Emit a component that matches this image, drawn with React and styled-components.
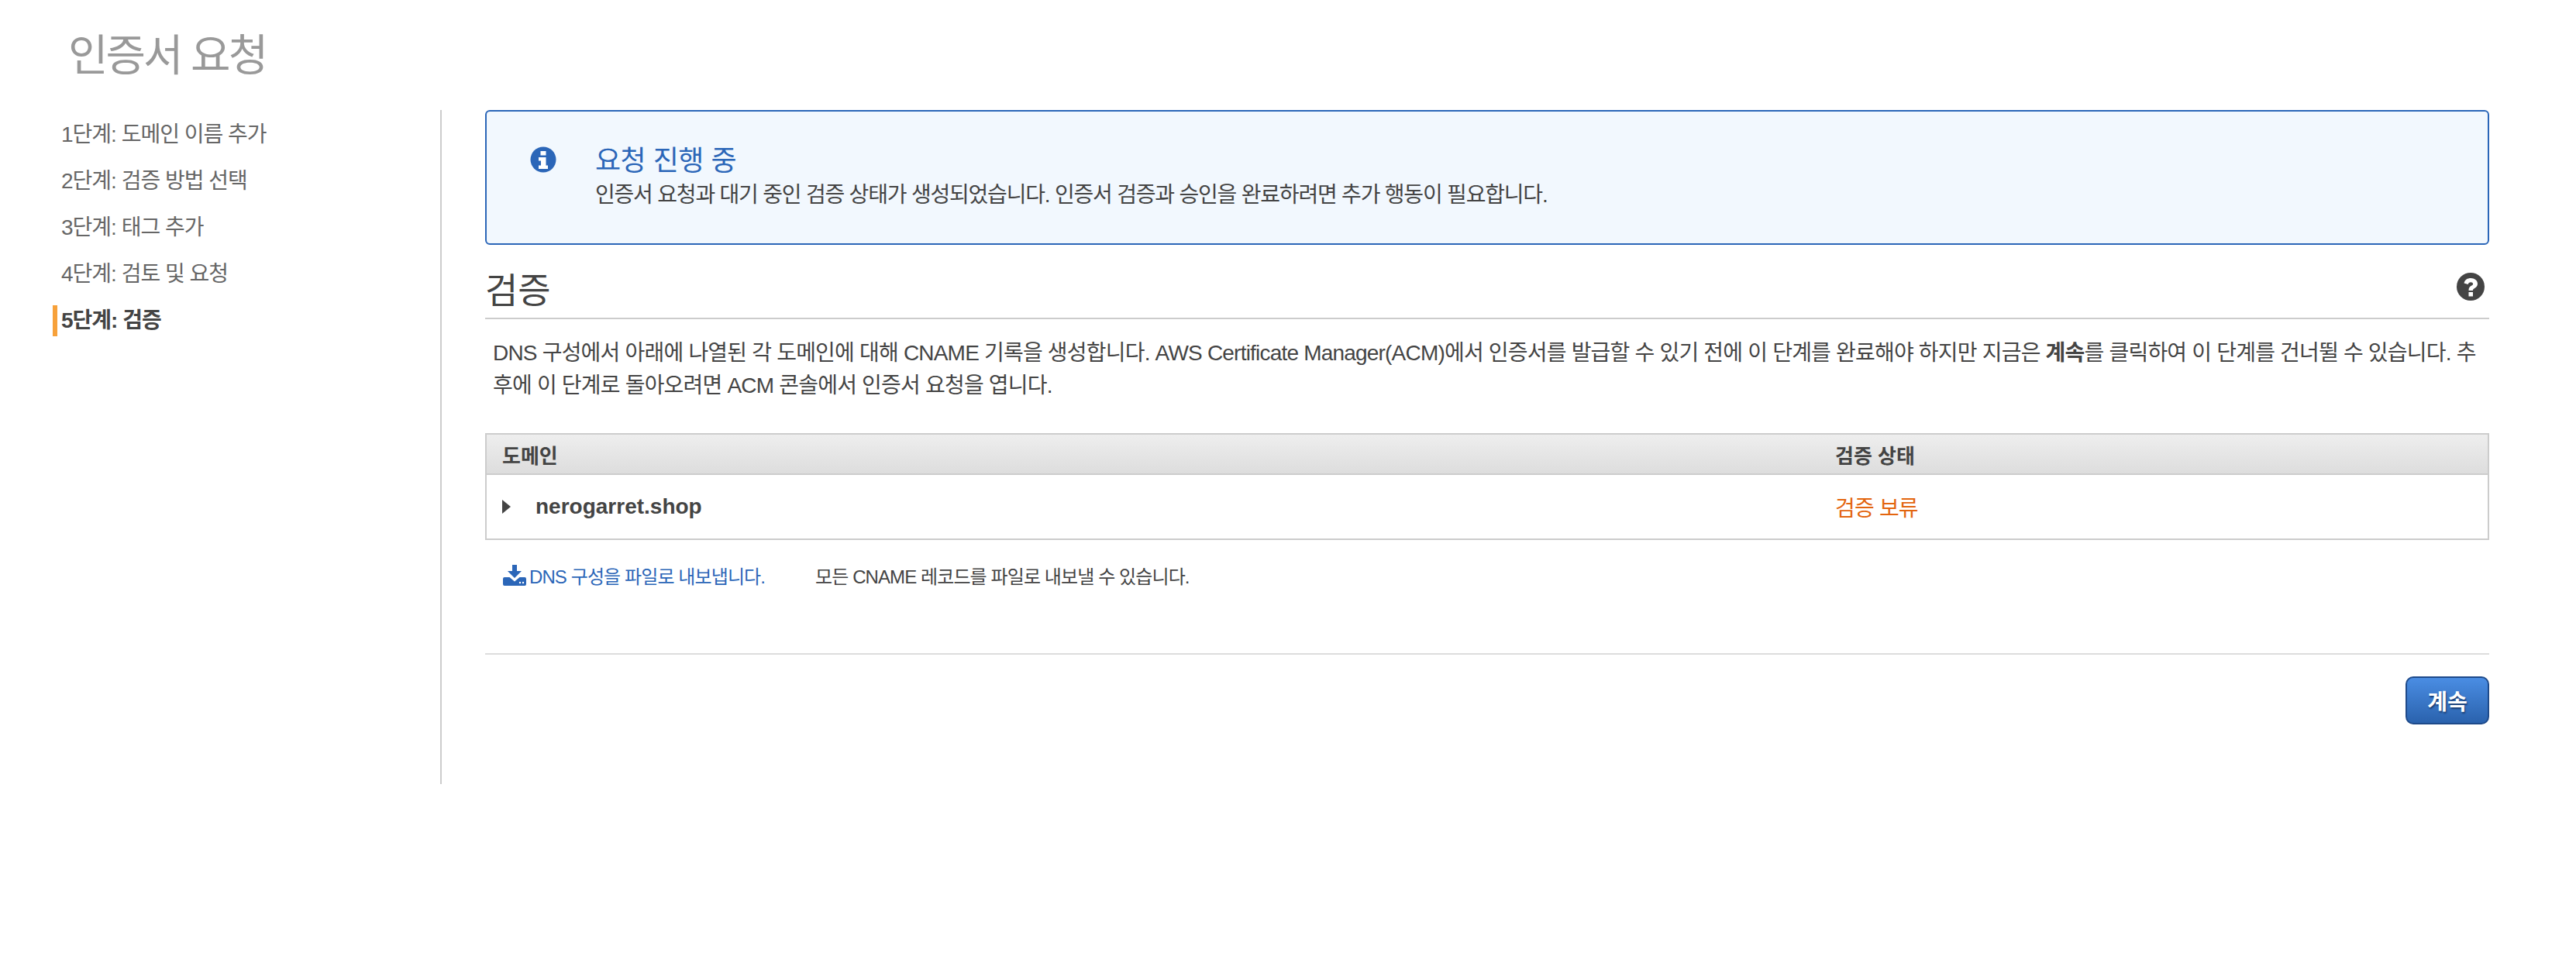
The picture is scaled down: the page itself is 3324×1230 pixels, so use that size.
import React from 'react'
import styled, {createGlobalStyle} from 'styled-components'

const GlobalStyle = createGlobalStyle`
	html, body {
		margin: 0;
		padding: 0;
		background: #fff;
	}
	body {
		font-family: "Liberation Sans", "Noto Sans CJK KR", sans-serif;
		color: #444;
	}
`;

const steps = [
	'1단계: 도메인 이름 추가',
	'2단계: 검증 방법 선택',
	'3단계: 태그 추가',
	'4단계: 검토 및 요청',
	'5단계: 검증'
];

const InfoIcon = () => (
	<svg width="34" height="34" viewBox="0 0 34 34">
		<circle cx="17" cy="17" r="16.5" fill="#2b66b8"/>
		<rect x="13.5" y="6" width="7" height="5.5" fill="#fff"/>
		<path d="M11 14h9.5v10.5H23V29H11v-4.5h3V18.5h-3z" fill="#fff"/>
	</svg>
);

const HelpIcon = () => (
	<svg width="36" height="36" viewBox="0 0 36 36">
		<circle cx="18" cy="18" r="18" fill="#444"/>
		<path d="M9.5 13.500C10.500 9 14 7 18.300 7c4.700 0 8.700 3 8.700 7.200 0 3-1.700 4.500-3.800 5.800-1.600 1-2.200 1.500-2.200 3H15.500c0-3.300 1-4.700 3-5.900 1.500-.9 2.600-1.500 2.600-2.700 0-1.300-1.300-2.200-2.900-2.200-1.800 0-2.900 1-3.500 2.800z" fill="#fff"/>
		<rect x="15.500" y="25" width="5.500" height="5.500" fill="#fff"/>
	</svg>
);

const DownloadIcon = () => (
	<svg width="30" height="27" viewBox="0 0 30 27">
		<path d="M12 0h6v8h6l-9 9-9-9h6z" fill="#2b66b8"/>
		<path d="M2 16h6.500l6.500 5.500 6.500-5.500H28a2 2 0 0 1 2 2v7a2 2 0 0 1-2 2H2a2 2 0 0 1-2-2v-7a2 2 0 0 1 2-2z" fill="#2b66b8"/>
		<circle cx="22" cy="23" r="1.200" fill="#fff"/>
		<circle cx="26" cy="23" r="1.200" fill="#fff"/>
	</svg>
);

const CaretIcon = () => (
	<svg width="11" height="18" viewBox="0 0 11 18">
		<path d="M0 0l11 9-11 9z" fill="#444"/>
	</svg>
);

export default function App() {
	return (
		<Page>
			<GlobalStyle/>
			<Title>인증서 요청</Title>
			<Columns>
				<Sidebar>
					{steps.map((step, i) => (
						<Step key={step} active={i === steps.length - 1}>{step}</Step>
					))}
				</Sidebar>
				<Main>
					<Alert>
						<AlertIcon><InfoIcon/></AlertIcon>
						<div>
							<AlertTitle>요청 진행 중</AlertTitle>
							<AlertText>인증서 요청과 대기 중인 검증 상태가 생성되었습니다. 인증서 검증과 승인을 완료하려면 추가 행동이 필요합니다.</AlertText>
						</div>
					</Alert>

					<SectionHeader>
						<SectionTitle>검증</SectionTitle>
						<HelpIcon/>
					</SectionHeader>

					<Paragraph>
						DNS 구성에서 아래에 나열된 각 도메인에 대해 CNAME 기록을 생성합니다. AWS Certificate Manager(ACM)에서 인증서를 발급할 수 있기 전에 이 단계를 완료해야 하지만 지금은 <b>계속</b>를 클릭하여 이 단계를 건너뛸 수 있습니다. 추후에 이 단계로 돌아오려면 ACM 콘솔에서 인증서 요청을 엽니다.
					</Paragraph>

					<Table>
						<HeaderRow>
							<DomainCol>도메인</DomainCol>
							<div>검증 상태</div>
						</HeaderRow>
						<BodyRow>
							<DomainCol>
								<CaretIcon/>
								<DomainName>nerogarret.shop</DomainName>
							</DomainCol>
							<Status>검증 보류</Status>
						</BodyRow>
					</Table>

					<ExportRow>
						<ExportLink>
							<DownloadIcon/>
							DNS 구성을 파일로 내보냅니다.
						</ExportLink>
						<ExportNote>모든 CNAME 레코드를 파일로 내보낼 수 있습니다.</ExportNote>
					</ExportRow>

					<Footer>
						<ContinueButton>계속</ContinueButton>
					</Footer>
				</Main>
			</Columns>
		</Page>
	)
}

const Page = styled.div`
	width: 3324px;
	height: 1230px;
	overflow: hidden;
	background: #fff;
	box-sizing: border-box;
	padding: 36px 112px 0 68px;
`;

const Title = styled.h1`
	margin: 0 0 0 20px;
	height: 72px;
	line-height: 72px;
	font-size: 56px;
	font-weight: 400;
	color: #999;
	letter-spacing: -3px;
`;

const Columns = styled.div`
	margin-top: 34px;
	display: flex;
`;

const Sidebar = styled.nav`
	width: 500px;
	height: 858px;
	flex: none;
	border-right: 2px solid #ccc;
	padding-top: 12px;
`;

const Step = styled.div`
	height: 40px;
	line-height: 40px;
	margin-bottom: 20px;
	padding-left: 5px;
	font-size: 28px;
	letter-spacing: -1px;
	color: ${props => props.active ? '#444' : '#666'};
	font-weight: ${props => props.active ? 700 : 400};
	border-left: 6px solid ${props => props.active ? '#f7a13a' : 'transparent'};
`;

const Main = styled.main`
	flex: 1;
	margin-left: 56px;
`;

const Alert = styled.div`
	height: 174px;
	box-sizing: border-box;
	display: flex;
	border: 2px solid #2b66b8;
	border-radius: 6px;
	background: #f2f8fe;
	padding: 42px 0 0 56px;
	color: #444;
`;

const AlertIcon = styled.div`
	width: 84px;
	flex: none;
	padding-top: 3px;
`;

const AlertTitle = styled.div`
	height: 44px;
	line-height: 44px;
	font-size: 36px;
	letter-spacing: -0.5px;
	color: #2b66b8;
`;

const AlertText = styled.div`
	height: 40px;
	line-height: 40px;
	margin-top: 2px;
	font-size: 28px;
	letter-spacing: -1.2px;
`;

const SectionHeader = styled.div`
	margin-top: 30px;
	height: 58px;
	display: flex;
	justify-content: space-between;
	padding-right: 6px;
	border-bottom: 2px solid #ccc;
	align-items: flex-start;
	padding-top: 6px;
`;

const SectionTitle = styled.h2`
	margin: 0;
	line-height: 46px;
	font-size: 46px;
	font-weight: 400;
	color: #444;
`;

const Paragraph = styled.p`
	margin: 23px 0 0;
	padding: 0 10px;
	font-size: 28px;
	line-height: 42px;
	letter-spacing: -0.8px;
	color: #444;
`;

const Table = styled.div`
	margin-top: 40px;
	border: 2px solid #ccc;
`;

const HeaderRow = styled.div`
	height: 50px;
	display: flex;
	align-items: center;
	font-size: 26px;
	font-weight: 700;
	color: #444;
	background: linear-gradient(#eee, #ddd);
	border-bottom: 2px solid #ccc;
	padding-left: 20px;
`;

const BodyRow = styled.div`
	height: 82px;
	display: flex;
	align-items: center;
	padding-left: 20px;
`;

const DomainCol = styled.div`
	width: 1720px;
	flex: none;
	display: flex;
	align-items: center;
`;

const DomainName = styled.span`
	margin-left: 32px;
	font-size: 28px;
	font-weight: 700;
	color: #444;
`;

const Status = styled.div`
	font-size: 28px;
	letter-spacing: -0.8px;
	color: #e3650f;
`;

const ExportRow = styled.div`
	margin-top: 31px;
	height: 28px;
	display: flex;
	align-items: center;
	padding-left: 23px;
	font-size: 24px;
	letter-spacing: -0.9px;
`;

const ExportLink = styled.a`
	display: flex;
	align-items: center;
	gap: 4px;
	color: #2b66b8;
	width: 403px;
	flex: none;
`;

const ExportNote = styled.span`
	color: #444;
`;

const Footer = styled.div`
	margin-top: 87px;
	border-top: 2px solid #ddd;
	padding-top: 28px;
	display: flex;
	justify-content: flex-end;
`;

const ContinueButton = styled.button`
	width: 108px;
	height: 62px;
	box-sizing: border-box;
	border: 2px solid #1e4a8a;
	border-radius: 10px;
	background: linear-gradient(#4a8de3, #2a62ad);
	color: #fff;
	font-family: inherit;
	font-size: 28px;
	font-weight: 700;
	text-shadow: 1px 2px 2px #1a3c70;
	padding: 0;
`;
